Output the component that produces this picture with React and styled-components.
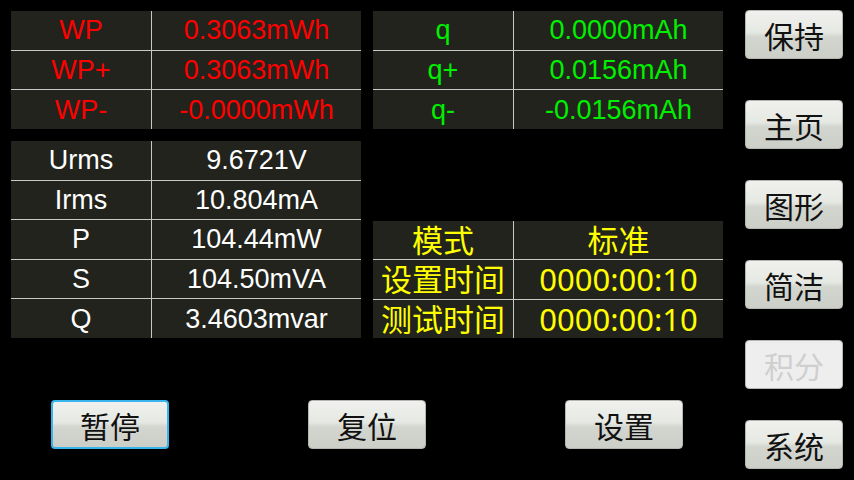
import React from 'react';
import styled, { createGlobalStyle } from 'styled-components';

const GlobalStyle = createGlobalStyle`
  html, body {
    margin: 0;
    padding: 0;
    background: #000;
  }
  body {
    width: 854px;
    height: 480px;
    overflow: hidden;
    font-family: "Liberation Sans", "Noto Sans CJK SC", sans-serif;
  }
`

const colors = {
  red: '#ff0000',
  green: '#00f000',
  white: '#ffffff',
  yellow: '#ffff00',
};

const energy = [
  ['WP', '0.3063mWh'],
  ['WP+', '0.3063mWh'],
  ['WP-', '-0.0000mWh'],
];

const charge = [
  ['q', '0.0000mAh'],
  ['q+', '0.0156mAh'],
  ['q-', '-0.0156mAh'],
];

const power = [
  ['Urms', '9.6721V'],
  ['Irms', '10.804mA'],
  ['P', '104.44mW'],
  ['S', '104.50mVA'],
  ['Q', '3.4603mvar'],
];

const timing = [
  ['模式', '标准'],
  ['设置时间', '0000:00:10'],
  ['测试时间', '0000:00:10'],
];

const sideButtons = [
  { label: '保持', gap: 0 },
  { label: '主页', gap: 41 },
  { label: '图形', gap: 31 },
  { label: '简洁', gap: 31 },
  { label: '积分', gap: 31, disabled: true },
  { label: '系统', gap: 31 },
];

class App extends React.Component {
  renderTable(rows, color, height, cjk) {
    return (
      <Table $height={height}>
        {rows.map(([name, value]) => (
          <React.Fragment key={name}>
            <Cell $color={color} $cjk={cjk}>{name}</Cell>
            <Cell $color={color} $cjk={cjk}>{value}</Cell>
          </React.Fragment>
        ))}
      </Table>
    );
  }

  render() {
    return (
      <Screen>
        <GlobalStyle />
        <Main>
          <TableRow>
            {this.renderTable(energy, colors.red, 118)}
            {this.renderTable(charge, colors.green, 118)}
          </TableRow>
          <TableRow $bottom>
            {this.renderTable(power, colors.white, 197)}
            {this.renderTable(timing, colors.yellow, 117, true)}
          </TableRow>
          <BottomBar>
            <Button $focused>暂停</Button>
            <Button>复位</Button>
            <Button>设置</Button>
          </BottomBar>
        </Main>
        <SideBar>
          {sideButtons.map((b) => (
            <Button key={b.label} $gap={b.gap} $disabled={b.disabled} $side>
              {b.label}
            </Button>
          ))}
        </SideBar>
      </Screen>
    );
  }
}

const Screen = styled.div`
  display: flex;
  width: 854px;
  height: 480px;
  background: #000;
`

const Main = styled.div`
  display: flex;
  flex-direction: column;
  width: 745px;
  padding: 11px 0 0 11px;
  box-sizing: border-box;
`

const TableRow = styled.div`
  display: flex;
  align-items: ${(p) => (p.$bottom ? 'flex-end' : 'flex-start')};
  gap: 12px;
  margin-bottom: 12px;
`

const Table = styled.div`
  display: grid;
  grid-template-columns: 140px 209px;
  grid-auto-rows: 1fr;
  gap: 1px;
  width: 350px;
  height: ${(p) => p.$height}px;
  background: #c8c8c8;
`

const Cell = styled.div`
  display: flex;
  align-items: center;
  justify-content: center;
  padding-top: 1px;
  background: #21231c;
  color: ${(p) => p.$color};
  font-family: ${(p) =>
    p.$cjk
      ? '"Noto Sans", "Noto Sans CJK SC", sans-serif'
      : '"Liberation Sans", "Noto Sans CJK SC", sans-serif'};
  font-size: ${(p) => (p.$cjk ? 31 : 27)}px;
  line-height: 1;
  white-space: nowrap;
`

const BottomBar = styled.div`
  display: flex;
  gap: 139px;
  padding-left: 40px;
  margin-top: 50px;
`

const SideBar = styled.div`
  display: flex;
  flex-direction: column;
  padding-top: 10px;
`

const Button = styled.div`
  display: flex;
  align-items: center;
  justify-content: center;
  box-sizing: border-box;
  width: ${(p) => (p.$side ? 98 : 118)}px;
  height: 49px;
  margin-top: ${(p) => p.$gap || 0}px;
  border-radius: 4px;
  border: ${(p) => (p.$focused ? '2px solid #38b4ec' : '1px solid #b4b6b0')};
  background: ${(p) =>
    p.$disabled
      ? '#eeeeee'
      : 'linear-gradient(to bottom, #f0f1ee 0%, #e6e8e3 45%, #d3d5cf 55%, #cccec8 100%)'};
  color: ${(p) => (p.$disabled ? '#cfcfcf' : '#111')};
  font-family: "Noto Sans CJK SC", sans-serif;
  font-size: 30px;
  line-height: 1;
`

export default App;
